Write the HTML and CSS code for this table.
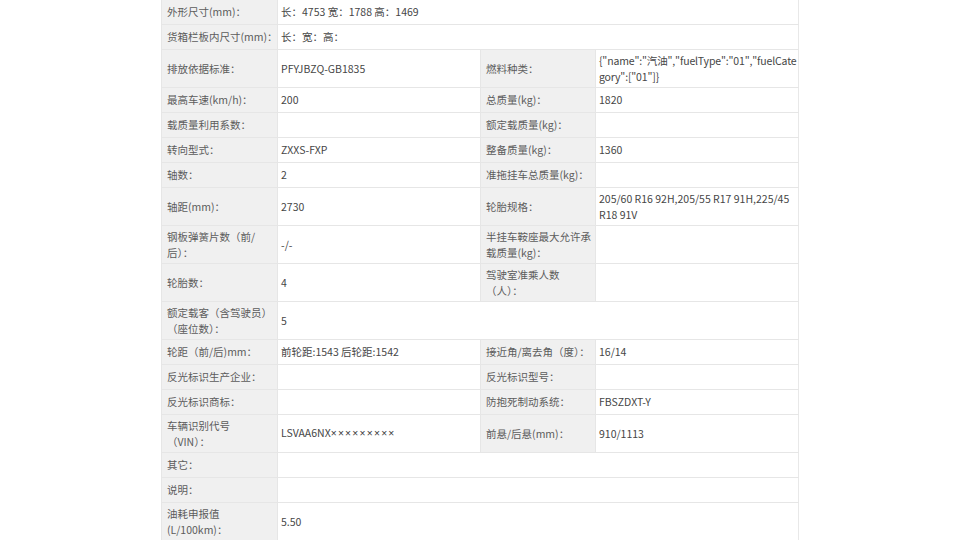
FILE: index.html
```html
<!DOCTYPE html>
<html lang="zh-CN">
<head>
<meta charset="utf-8">
<title>车辆参数</title>
<link rel="stylesheet" href="styles.css">
</head>
<body>
<table class="spec">
  <colgroup>
    <col class="c-label"><col class="c-value"><col class="c-label2"><col class="c-value2">
  </colgroup>
  <tr><td class="lb">外形尺寸(mm)：</td><td class="vl" colspan="3">长：4753 宽：1788 高：1469</td></tr>
  <tr><td class="lb">货箱栏板内尺寸(mm)：</td><td class="vl" colspan="3">长：宽：高：</td></tr>
  <tr><td class="lb">排放依据标准：</td><td class="vl">PFYJBZQ-GB1835</td><td class="lb">燃料种类：</td><td class="vl nw">{"name":"汽油","fuelType":"01","fuelCate<br>gory":["01"]}</td></tr>
  <tr><td class="lb">最高车速(km/h)：</td><td class="vl">200</td><td class="lb">总质量(kg)：</td><td class="vl">1820</td></tr>
  <tr><td class="lb">载质量利用系数：</td><td class="vl"></td><td class="lb">额定载质量(kg)：</td><td class="vl"></td></tr>
  <tr><td class="lb">转向型式：</td><td class="vl">ZXXS-FXP</td><td class="lb">整备质量(kg)：</td><td class="vl">1360</td></tr>
  <tr><td class="lb">轴数：</td><td class="vl">2</td><td class="lb">准拖挂车总质量(kg)：</td><td class="vl"></td></tr>
  <tr><td class="lb">轴距(mm)：</td><td class="vl">2730</td><td class="lb">轮胎规格：</td><td class="vl">205/60 R16 92H,205/55 R17 91H,225/45 R18 91V</td></tr>
  <tr><td class="lb">钢板弹簧片数（前/<br>后）：</td><td class="vl">-/-</td><td class="lb">半挂车鞍座最大允许承<br>载质量(kg)：</td><td class="vl"></td></tr>
  <tr><td class="lb">轮胎数：</td><td class="vl">4</td><td class="lb">驾驶室准乘人数<br>（人）：</td><td class="vl"></td></tr>
  <tr><td class="lb">额定载客（含驾驶员）<br>（座位数）：</td><td class="vl" colspan="3">5</td></tr>
  <tr><td class="lb">轮距（前/后)mm：</td><td class="vl">前轮距:1543 后轮距:1542</td><td class="lb">接近角/离去角（度）：</td><td class="vl">16/14</td></tr>
  <tr><td class="lb">反光标识生产企业：</td><td class="vl"></td><td class="lb">反光标识型号：</td><td class="vl"></td></tr>
  <tr><td class="lb">反光标识商标：</td><td class="vl"></td><td class="lb">防抱死制动系统：</td><td class="vl">FBSZDXT-Y</td></tr>
  <tr><td class="lb">车辆识别代号<br>（VIN）：</td><td class="vl">LSVAA6NX<span class="mask">×××××××××</span></td><td class="lb">前悬/后悬(mm)：</td><td class="vl">910/1113</td></tr>
  <tr><td class="lb">其它：</td><td class="vl" colspan="3"></td></tr>
  <tr><td class="lb">说明：</td><td class="vl" colspan="3"></td></tr>
  <tr><td class="lb">油耗申报值<br>(L/100km)：</td><td class="vl" colspan="3">5.50</td></tr>
</table>
</body>
</html>
```

FILE: styles.css
```css
html, body {
  margin: 0;
  padding: 0;
  background: #ffffff;
}

body {
  font-family: "Noto Sans CJK TC", "Noto Sans CJK SC", sans-serif;
  font-size: 10.5px;
  color: #444444;
}

.spec {
  width: 637px;
  margin: 0 auto;
  border-collapse: collapse;
  table-layout: fixed;
  border-right: 1px solid #e8e8e8;
}

.c-label { width: 116px; }
.c-value { width: 203px; }
.c-label2 { width: 115px; }
.c-value2 { width: 203px; }

.spec td {
  height: 18px;
  padding: 3px 2px 3px 3px;
  line-height: 15.5px;
  border-bottom: 1px solid #e6e6e6;
  border-left: 1px solid #e6e6e6;
  vertical-align: middle;
  text-align: left;
  white-space: nowrap;
}

.spec td.lb {
  padding-left: 5px;
  background: #f0f0f0;
  color: #5c5c5c;
}

.spec td.vl {
  background: #ffffff;
  color: #464646;
  white-space: normal;
}

.spec td.nw {
  white-space: nowrap;
  overflow: hidden;
  letter-spacing: -0.16px;
}

.mask {
  font-family: "Noto Sans", sans-serif;
  letter-spacing: 1.2px;
}
```
